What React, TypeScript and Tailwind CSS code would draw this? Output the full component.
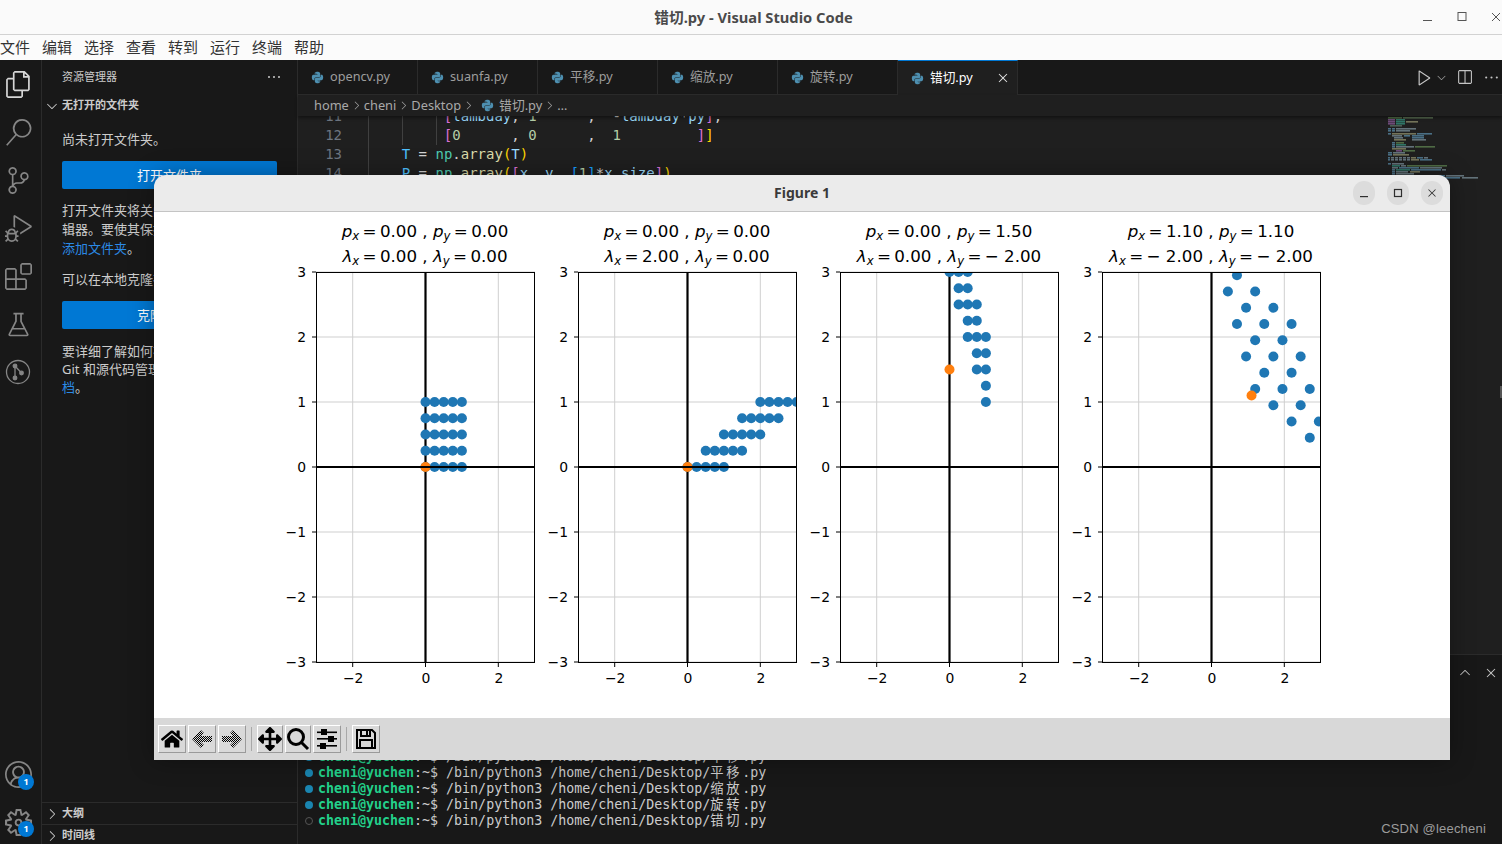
import React from "react";
import { FaPython, FaHome, FaArrowsAlt } from "react-icons/fa";
import {
  VscFiles, VscSearch, VscSourceControl, VscDebugAlt, VscExtensions, VscBeaker, VscAccount, VscSettingsGear,
  VscChevronDown, VscChevronRight, VscChevronUp, VscClose, VscEllipsis, VscPlay, VscSplitHorizontal,
} from "react-icons/vsc";

const UI = "[font-family:'Noto_Sans','Noto_Sans_CJK_SC',sans-serif]";
const MONO = "[font-family:'DejaVu_Sans_Mono','Noto_Sans_CJK_SC',monospace]";

const W = 219, H = 391, X0 = 25, Y0 = 60;
const sx = (v: number) => 134.5 + v * 36.4;
const sy = (v: number) => Y0 + 195 - v * 65;
const G = [0, 0.25, 0.5, 0.75, 1];

function Sym({ s, sub }: { s: string; sub: string }) {
  return (
    <>
      <tspan fontStyle="italic">{s}</tspan>
      <tspan fontStyle="italic" fontSize="11.7" dy="3">{sub}</tspan>
      <tspan dy="-3">{"\u2009"}</tspan>
    </>
  );
}

function Plot({ id, px, py, lx, ly }: { id: string; px: number; py: number; lx: number; ly: number }) {
  const pts: [number, number][] = [];
  for (const x of G) for (const y of G) pts.push([x + lx * (y - px), y + ly * (x - py)]);
  const f = (v: number) => (v < 0 ? "− " + (-v).toFixed(2) : v.toFixed(2));
  const cx = 134;
  return (
    <svg width="262" height="488" className="shrink-0 overflow-visible" fontFamily="'DejaVu Sans', sans-serif" fill="#000">
      <defs>
        <clipPath id={id}><rect x={X0} y={Y0} width={W} height={H} /></clipPath>
      </defs>
      <text x={cx} y="25" textAnchor="middle" fontSize="16.7">
        <Sym s="p" sub="x" />={"\u2009"}{f(px)} , <Sym s="p" sub="y" />={"\u2009"}{f(py)}
      </text>
      <text x={cx} y="50" textAnchor="middle" fontSize="16.7">
        <Sym s="λ" sub="x" />={"\u2009"}{f(lx)} , <Sym s="λ" sub="y" />={"\u2009"}{f(ly)}
      </text>
      {[-3, -2, -1, 0, 1, 2, 3].map((v) => (
        <g key={v}>
          <line x1={X0} x2={X0 + W} y1={sy(v)} y2={sy(v)} stroke="#cfcfcf" strokeWidth="1" />
          <line x1={X0 - 4} x2={X0} y1={sy(v)} y2={sy(v)} stroke="#000" strokeWidth="1" />
          <text x={X0 - 10} y={sy(v) + 5} textAnchor="end" fontSize="13.9">{v < 0 ? "−" + -v : v}</text>
        </g>
      ))}
      {[-2, 0, 2].map((v) => (
        <g key={v}>
          <line y1={Y0} y2={Y0 + H} x1={sx(v)} x2={sx(v)} stroke="#cfcfcf" strokeWidth="1" />
          <line y1={Y0 + H} y2={Y0 + H + 4} x1={sx(v)} x2={sx(v)} stroke="#000" strokeWidth="1" />
          <text x={sx(v) + 0.5} y={Y0 + H + 20} textAnchor="middle" fontSize="13.9">{v < 0 ? "−" + -v : v}</text>
        </g>
      ))}
      <g clipPath={`url(#${id})`}>
        <line x1={sx(0)} x2={sx(0)} y1={Y0} y2={Y0 + H} stroke="#000" strokeWidth="2.2" />
        {pts.map(([x, y], i) => (
          <circle key={i} cx={sx(x)} cy={sy(y)} r="5" fill="#1f77b4" />
        ))}
        <circle cx={sx(px)} cy={sy(py)} r="5" fill="#ff7f0e" />
        <line x1={X0} x2={X0 + W} y1={sy(0)} y2={sy(0)} stroke="#000" strokeWidth="2.2" />
      </g>
      <rect x={X0 + 0.5} y={Y0 + 0.5} width={W - 1} height={H - 1} fill="none" stroke="#000" strokeWidth="1" />
    </svg>
  );
}

function Btn({ children, w = "w-[28px]" }: { children: React.ReactNode; w?: string }) {
  return (
    <div className={`${w} h-[28px] flex items-center justify-center border border-t-white border-l-white border-b-[#9a9a9a] border-r-[#9a9a9a] bg-[#d9d9d9]`}>
      {children}
    </div>
  );
}

function Arrow({ flip }: { flip?: boolean }) {
  const pid = flip ? "ditherF" : "ditherB";
  return (
    <svg width="22" height="22" viewBox="0 0 22 22" style={flip ? { transform: "scaleX(-1)" } : undefined}>
      <defs>
        <pattern id={pid} width="2" height="2" patternUnits="userSpaceOnUse">
          <rect width="1" height="1" fill="#000" />
          <rect x="1" y="1" width="1" height="1" fill="#000" />
        </pattern>
      </defs>
      <path d="M1 11 L10 2 L13 5 L10 8 H21 V14 H10 L13 17 L10 20 Z" fill={`url(#${pid})`} />
    </svg>
  );
}

function Toolbar() {
  return (
    <div className="h-[42px] bg-[#d8d8d8] flex items-center pl-[4px] gap-[2px] shrink-0">
      <Btn><FaHome size={22} color="#000" /></Btn>
      <Btn><Arrow /></Btn>
      <Btn><Arrow flip /></Btn>
      <div className="w-px h-[24px] bg-[#a8a8a8] mx-[3px]" />
      <Btn w="w-[26px]"><FaArrowsAlt size={24} color="#000" /></Btn>
      <Btn w="w-[26px]">
        <svg width="24" height="24" viewBox="0 0 24 24" fill="none" stroke="#000">
          <circle cx="10" cy="10" r="7.5" strokeWidth="3" />
          <path d="M15.5 15.5 L22 22" strokeWidth="3" />
        </svg>
      </Btn>
      <Btn>
        <svg width="22" height="22" viewBox="0 0 22 22" fill="#000">
          <rect x="1" y="3.5" width="20" height="1.6" />
          <rect x="5" y="1" width="6" height="6" />
          <rect x="1" y="10" width="20" height="1.6" />
          <rect x="12" y="8" width="6" height="6" />
          <rect x="1" y="17" width="20" height="1.6" />
          <rect x="4" y="15" width="6" height="6" />
        </svg>
      </Btn>
      <div className="w-px h-[24px] bg-[#a8a8a8] mx-[3px]" />
      <Btn>
        <svg width="22" height="22" viewBox="0 0 22 22" fill="none" stroke="#000" strokeWidth="2">
          <path d="M2 2 H17 L20 5 V20 H2 Z" />
          <path d="M6 2 V8 H15 V2" />
          <path d="M5 20 V12 H17 V20" />
          <rect x="11" y="3" width="2" height="4" fill="#000" stroke="none" />
        </svg>
      </Btn>
    </div>
  );
}

function CircleBtn({ children }: { children: React.ReactNode }) {
  return <div className="w-[22px] h-[24px] rounded-full bg-[#dcdcdc] flex items-center justify-center text-[#2e2e2e]">{children}</div>;
}

function Figure() {
  return (
    <div className="absolute left-[154px] top-[175px] w-[1296px] h-[585px] flex flex-col rounded-t-[12px] overflow-hidden shadow-[0_0_24px_rgba(0,0,0,0.35)]">
      <div className="relative h-[37px] shrink-0 bg-[#ebebeb] border-b border-[#c4c4c4] flex items-center justify-center pb-[2px]">
        <span className={`${UI} text-[14px] font-bold text-[#3a3a3a]`}>Figure 1</span>
        <div className="absolute right-[7px] top-[6px] flex gap-[12px]">
          <CircleBtn><svg width="10" height="10"><rect x="1" y="8" width="8" height="1.2" fill="#2e2e2e" /></svg></CircleBtn>
          <CircleBtn><svg width="10" height="10"><rect x="1.5" y="1.5" width="7" height="7" fill="none" stroke="#2e2e2e" strokeWidth="1.2" /></svg></CircleBtn>
          <CircleBtn><VscClose size={14} /></CircleBtn>
        </div>
      </div>
      <div className="flex-1 bg-white flex pl-[137px] overflow-hidden">
        <Plot id="a" px={0} py={0} lx={0} ly={0} />
        <Plot id="b" px={0} py={0} lx={2} ly={0} />
        <Plot id="c" px={0} py={1.5} lx={0} ly={-2} />
        <Plot id="d" px={1.1} py={1.1} lx={-2} ly={-2} />
      </div>
      <Toolbar />
    </div>
  );
}

function Activity() {
  const top = [VscFiles, VscSearch, VscSourceControl, VscDebugAlt, VscExtensions, VscBeaker];
  return (
    <div className="w-[42px] shrink-0 bg-[#181818] border-r border-[#2b2b2b] flex flex-col items-center text-[#868686] overflow-hidden pr-[5px]">
      {top.map((I, i) => (
        <div key={i} className={`h-[48px] w-full flex items-center justify-center ${i === 0 ? "text-[#d7d7d7]" : ""}`}>
          <I size={27} />
        </div>
      ))}
      <div className="h-[48px] w-full flex items-center justify-center">
        <svg width="26" height="26" viewBox="0 0 26 26" fill="none" stroke="currentColor" strokeWidth="1.3">
          <circle cx="13" cy="13" r="11.5" />
          <circle cx="10" cy="7" r="1.8" fill="currentColor" />
          <circle cx="10" cy="19" r="1.8" fill="currentColor" />
          <circle cx="16.5" cy="14" r="1.8" fill="currentColor" />
          <path d="M10 7 V19 M10 7 L16.5 14" />
        </svg>
      </div>
      <div className="mt-auto -mb-[2px] w-full">
        <div className="relative h-[48px] flex items-center justify-center">
          <VscAccount size={27} />
          <span className="absolute left-[18px] top-[24px] w-[16px] h-[16px] rounded-full bg-[#0078d4] text-white text-[9px] font-bold flex items-center justify-center">1</span>
        </div>
        <div className="relative h-[48px] flex items-center justify-center">
          <VscSettingsGear size={27} />
          <span className="absolute left-[18px] top-[23px] w-[16px] h-[16px] rounded-full bg-[#0078d4] text-white text-[9px] font-bold flex items-center justify-center">1</span>
        </div>
      </div>
    </div>
  );
}

function Sidebar() {
  return (
    <div className={`${UI} w-[256px] shrink-0 bg-[#181818] border-r border-[#2b2b2b] flex flex-col text-[#cccccc] overflow-hidden`}>
      <div className="h-[34px] shrink-0 flex items-center justify-between pl-[20px] pr-[15px] text-[11px]">
        <span>资源管理器</span>
        <VscEllipsis size={16} />
      </div>
      <div className="h-[22px] shrink-0 flex items-center gap-[2px] pl-[2px] pt-[1px] text-[11px] font-bold">
        <VscChevronDown size={16} />
        <span>无打开的文件夹</span>
      </div>
      <div className="pl-[20px] w-[235px] text-[13px] leading-[19px] whitespace-nowrap">
        <p className="mt-[14px]">尚未打开文件夹。</p>
        <div className="mt-[12px] h-[28px] rounded-[2px] bg-[#0078d4] text-white flex items-center justify-center">打开文件夹</div>
        <p className="mt-[12px]">打开文件夹将关闭所有当前打开的编<br />辑器。要使其保持打开状态，请<br /><span className="text-[#2b8ae6]">添加文件夹</span>。</p>
        <p className="mt-[12px]">可以在本地克隆存储库。</p>
        <div className="mt-[12px] h-[28px] rounded-[2px] bg-[#0078d4] text-white flex items-center justify-center">克隆存储库</div>
        <p className="mt-[13px] leading-[18px]">要详细了解如何在 VS Code 中使用<br />Git 和源代码管理，请阅读我们的文<br /><span className="text-[#2b8ae6]">档</span>。</p>
      </div>
      <div className="mt-auto h-[22px] shrink-0 border-t border-[#2b2b2b] flex items-center gap-[2px] pl-[2px] text-[11px] font-bold">
        <VscChevronRight size={16} /><span>大纲</span>
      </div>
      <div className="h-[20px] shrink-0 border-t border-[#2b2b2b] flex items-center gap-[2px] pl-[2px] pt-[2px] text-[11px] font-bold">
        <VscChevronRight size={16} /><span>时间线</span>
      </div>
    </div>
  );
}

function Tabs() {
  const names = ["opencv.py", "suanfa.py", "平移.py", "缩放.py", "旋转.py"];
  return (
    <div className={`${UI} h-[35px] shrink-0 bg-[#181818] border-b border-[#2b2b2b] flex text-[12.7px]`}>
      {names.map((n) => (
        <div key={n} className="w-[120px] h-[34px] shrink-0 flex items-center pl-[13px] gap-[6px] border-r border-[#2b2b2b] text-[#9d9d9d]">
          <FaPython size={13} color="#4d8fb0" />
          <span>{n}</span>
        </div>
      ))}
      <div className="w-[120px] h-[35px] shrink-0 flex items-center pl-[13px] gap-[6px] border-r border-t border-[#2b2b2b] border-t-[#0078d4] bg-[#1f1f1f] text-white">
        <FaPython size={13} color="#4d8fb0" />
        <span>错切.py</span>
        <VscClose size={16} className="ml-auto mr-[6px] text-[#e0e0e0]" />
      </div>
      <div className="flex-1 flex items-center justify-end pr-[2px] text-[#c5c5c5]">
        <VscPlay size={19} />
        <VscChevronDown size={13} className="ml-[1px] mr-[8px] text-[#9d9d9d]" />
        <VscSplitHorizontal size={17} className="mr-[10px]" />
        <VscEllipsis size={17} />
      </div>
    </div>
  );
}

function Crumbs() {
  const Sep = () => <VscChevronRight size={13} className="mx-[1px] text-[#a0a0a0]" />;
  return (
    <div className={`${UI} h-[21px] shrink-0 bg-[#1f1f1f] flex items-center pl-[16px] text-[12.8px] text-[#a9a9a9] shadow-[0_2px_3px_rgba(0,0,0,0.4)] relative z-10`}>
      <span>home</span><Sep /><span>cheni</span><Sep /><span>Desktop</span><Sep />
      <FaPython size={13} color="#4d8fb0" className="mx-[5px]" />
      <span>错切.py</span><Sep /><span>…</span>
    </div>
  );
}

type Tok = [string, string];
const K = { v: "#4fc1ff", w: "#d4d4d4", c: "#4ec9b0", f: "#dcdcaa", y: "#ffd700", p: "#da70d6", b: "#179fff", n: "#b5cea8", a: "#9cdcfe" };
const lines: { n: number; t: Tok[] }[] = [
  { n: 11, t: [["         ", K.w], ["[", K.p], ["lambday", K.a], [", ", K.w], ["1", K.n], ["      ,  ", K.w], ["-", K.w], ["lambday", K.a], ["*", K.w], ["py", K.a], ["]", K.p], [",", K.w]] },
  { n: 12, t: [["         ", K.w], ["[", K.p], ["0", K.n], ["      , ", K.w], ["0", K.n], ["      ,  ", K.w], ["1", K.n], ["         ", K.w], ["]", K.p], ["]", K.y]] },
  { n: 13, t: [["    ", K.w], ["T", K.v], [" = ", K.w], ["np", K.c], [".", K.w], ["array", K.f], ["(", K.y], ["T", K.a], [")", K.y]] },
  { n: 14, t: [["    ", K.w], ["P", K.v], [" = ", K.w], ["np", K.c], [".", K.w], ["array", K.f], ["(", K.y], ["[", K.p], ["x", K.a], [", ", K.w], ["y", K.a], [", ", K.w], ["[", K.b], ["1", K.n], ["]", K.b], ["*", K.w], ["x", K.a], [".", K.w], ["size", K.a], ["]", K.p], [")", K.y]] },
];

function Minimap() {
  const G1 = "#4f6b45", P = "#6d4a78", T = "#2f7566", B = "#4a6f85", Y = "#74745a", E = "#63727a", R = "#7a4f55";
  const rows: [number, number, number, string][] = [
    [0, 0, 14, G1], [0, 15, 30, "#55694f"],
    [2, 0, 7, P], [2, 8, 9, T], [4, 0, 7, P], [4, 8, 9, T], [4, 18, 12, Y], [6, 0, 7, P], [6, 8, 9, T], [8, 2, 12, "#4e5f55"],
    [11, 0, 3, B], [11, 4, 3, B], [11, 8, 20, E], [13, 0, 3, B], [13, 4, 3, B], [13, 8, 14, E],
    [16, 0, 3, B], [16, 4, 24, Y], [16, 29, 15, B], [18, 4, 10, E], [18, 16, 6, B], [18, 24, 12, B],
    [20, 6, 9, E], [20, 24, 12, B], [22, 6, 12, Y], [22, 24, 14, E],
    [25, 4, 3, B], [25, 8, 8, G1], [27, 4, 3, B], [27, 8, 10, T], [29, 4, 3, B], [29, 8, 18, E],
    [29, 27, 20, G1], [31, 4, 14, Y], [33, 8, 6, P], [33, 15, 12, G1],
    [35, 0, 4, B], [35, 5, 12, E], [37, 0, 4, B], [37, 5, 16, Y],
    [40, 0, 2, B], [40, 3, 3, E], [40, 7, 3, E], [40, 11, 3, E], [40, 15, 3, E], [40, 19, 3, E], [40, 23, 5, Y], [40, 29, 6, B], [40, 36, 4, E],
    [42, 0, 2, B], [42, 3, 3, E], [42, 7, 3, E], [42, 11, 3, E], [42, 15, 3, E], [42, 19, 3, E], [42, 23, 8, Y], [42, 32, 12, B],
    [46, 0, 3, B], [46, 4, 12, E], [48, 4, 8, T], [48, 13, 5, E], [48, 19, 40, G1],
    [50, 4, 6, E], [50, 11, 20, B], [50, 32, 22, E], [52, 4, 3, B], [52, 8, 14, T], [52, 23, 30, B], [52, 54, 4, E],
    [54, 4, 3, B], [54, 8, 12, E], [54, 22, 10, Y],
    [56, 4, 3, B], [56, 8, 18, E], [58, 10, 14, R], [58, 25, 8, Y], [58, 35, 22, B], [58, 58, 18, E], [60, 30, 20, R], [60, 52, 20, B], [60, 74, 16, E],
  ];
  return (
    <svg width="96" height="72" className="shrink-0">
      {rows.map(([y, x, w, c], i) => (
        <rect key={i} x={x} y={y} width={w} height="1.6" fill={c} />
      ))}
    </svg>
  );
}

function Editor() {
  return (
    <div className="flex-1 relative bg-[#1f1f1f] overflow-hidden flex min-h-0">
      <div className={`${MONO} flex-1 -mt-[9px] text-[14px] leading-[19px]`}>
        {lines.map((l) => (
          <div key={l.n} className="h-[19px] flex">
            <span className="w-[44px] shrink-0 text-right text-[#6e7681]">{l.n}</span>
            <span className="w-[26px] shrink-0" />
            <span className="whitespace-pre">
              {l.t.map(([s, c], i) => <span key={i} style={{ color: c }}>{s}</span>)}
            </span>
          </div>
        ))}
      </div>
      <div className="absolute left-[70px] top-0 bottom-0 w-px bg-[#404040]" />
      <div className="absolute left-[104px] top-0 h-[29px] w-px bg-[#404040]" />
      <div className="absolute left-[138px] top-0 h-[29px] w-px bg-[#404040]" />
      <div className="pr-[18px] pt-[1px]"><Minimap /></div>
      <div className="absolute right-0 top-[270px] w-[2px] h-[12px] bg-[#555]" />
    </div>
  );
}

function Term({ f, hollow }: { f: string; hollow?: boolean }) {
  return (
    <div className="h-[16px] flex items-center whitespace-pre">
      <span className={`w-[8px] h-[8px] rounded-full ml-[7px] mr-[5px] shrink-0 ${hollow ? "border border-[#555]" : "bg-[#1a85b0]"}`} />
      <span className="text-[#23d18b] font-bold">cheni@yuchen</span>
      <span className="text-[#cccccc]">:~$ /bin/python3 /home/cheni/Desktop/</span>
      <span className="text-[#cccccc] tracking-[2.7px]">{f}</span>
      <span className="text-[#cccccc]">.py</span>
    </div>
  );
}

function Panel() {
  return (
    <div className="h-[190px] shrink-0 bg-[#181818] border-t border-[#2b2b2b] flex flex-col">
      <div className="h-[36px] shrink-0 flex items-center justify-end gap-[10px] pr-[3px] text-[#c5c5c5]">
        <VscChevronUp size={16} />
        <VscClose size={16} />
      </div>
      <div className={`${MONO} mt-auto pb-[15px] text-[13.3px] leading-[16px]`}>
        <Term f="平移" />
        <Term f="平移" />
        <Term f="缩放" />
        <Term f="旋转" />
        <Term f="错切" hollow />
      </div>
    </div>
  );
}

export default function App() {
  return (
    <div className="relative w-[1502px] h-[844px] overflow-hidden flex flex-col bg-[#181818]">
      <div className={`${UI} relative h-[35px] shrink-0 bg-[#fafafa] border-b border-[#d2d2d2] flex items-center justify-center pl-[5px] text-[14.7px] font-bold text-[#4a4a4a]`}>
        错切.py - Visual Studio Code
        <div className="absolute right-0 top-0 h-[34px] flex items-center text-[#444]">
          <svg width="10" height="10" className="mr-[24px]"><rect x="0" y="8" width="9" height="1" fill="#555" /></svg>
          <svg width="10" height="10" className="mr-[24px]"><rect x="1" y="0.5" width="8" height="8" fill="none" stroke="#555" /></svg>
          <svg width="10" height="10" className="mr-[1px]"><path d="M1 1 L9 9 M9 1 L1 9" stroke="#555" /></svg>
        </div>
      </div>
      <div className={`${UI} h-[25px] shrink-0 bg-[#fbfbfb] flex items-center gap-[12px] text-[15px] text-[#333]`}>
        {["文件", "编辑", "选择", "查看", "转到", "运行", "终端", "帮助"].map((m) => <span key={m}>{m}</span>)}
      </div>
      <div className="flex-1 flex min-h-0">
        <Activity />
        <Sidebar />
        <div className="flex-1 flex flex-col min-w-0">
          <Tabs />
          <Crumbs />
          <Editor />
          <Panel />
        </div>
      </div>
      <Figure />
      <div className="absolute right-[16px] bottom-[6px] [font-family:'Liberation_Sans',sans-serif] text-[13px] tracking-[0.2px] text-[#9c9c9c]">CSDN @leecheni</div>
    </div>
  );
}
